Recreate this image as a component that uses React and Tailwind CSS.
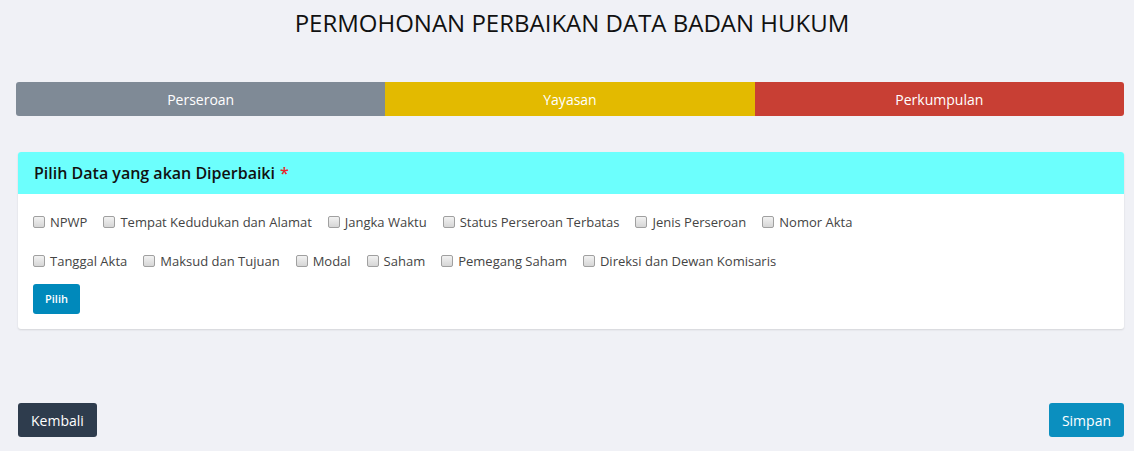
import React from "react";

const row1 = ["NPWP", "Tempat Kedudukan dan Alamat", "Jangka Waktu", "Status Perseroan Terbatas", "Jenis Perseroan", "Nomor Akta"];
const row2 = ["Tanggal Akta", "Maksud dan Tujuan", "Modal", "Saham", "Pemegang Saham", "Direksi dan Dewan Komisaris"];

function Check({ label }) {
  return (
    <label className="flex items-center gap-[5px] mr-[16px] cursor-pointer">
      <span className="w-[12px] h-[12px] rounded-[2px] border border-[#a0a0a0] bg-gradient-to-b from-[#f2f2f2] to-[#d6d6d6] -mt-[3px]"></span>
      <span className="text-[13px] text-[#444]">{label}</span>
    </label>
  );
}

export default function App() {
  return (
    <div className="min-h-[451px] bg-[#f0f1f6] font-['Open_Sans',sans-serif] flex flex-col">
      <h1 className="text-center text-[24px] text-[#111] pt-[7px] pl-[10px] leading-[32px]">PERMOHONAN PERBAIKAN DATA BADAN HUKUM</h1>

      <div className="flex mt-[43px] ml-[16px] mr-[10px] h-[34px] rounded-[3px] overflow-hidden text-[14px] text-white">
        <div className="flex-1 bg-[#7f8a96] flex items-center justify-center">Perseroan</div>
        <div className="flex-1 bg-[#e3ba00] flex items-center justify-center">Yayasan</div>
        <div className="flex-1 bg-[#c83f34] flex items-center justify-center">Perkumpulan</div>
      </div>

      <div className="mx-[18px] mr-[10px] mt-[36px] bg-white rounded-[3px] shadow-[0_1px_2px_rgba(0,0,0,0.12)] overflow-hidden">
        <div className="bg-[#6cfffd] h-[42px] flex items-center px-[16px] text-[16px] font-semibold text-[#111]">
          Pilih Data yang akan Diperbaiki <span className="text-[#e8262b] ml-[5px]">*</span>
        </div>
        <div className="px-[15px] pt-[19px] pb-[15px]">
          <div className="flex items-center h-[20px]">
            {row1.map((l) => <Check key={l} label={l} />)}
          </div>
          <div className="flex items-center h-[20px] mt-[19px]">
            {row2.map((l) => <Check key={l} label={l} />)}
          </div>
          <button className="mt-[12px] h-[30px] px-[12px] rounded-[3px] bg-[#0089bb] text-white text-[11px] font-semibold">Pilih</button>
        </div>
      </div>

      <div className="flex justify-between mx-[18px] mr-[10px] mt-[74px]">
        <button className="h-[34px] px-[13px] rounded-[3px] bg-[#2e3c4d] text-white text-[14px]">Kembali</button>
        <button className="h-[34px] px-[13px] rounded-[3px] bg-[#0b8fbf] text-white text-[14px]">Simpan</button>
      </div>
    </div>
  );
}
